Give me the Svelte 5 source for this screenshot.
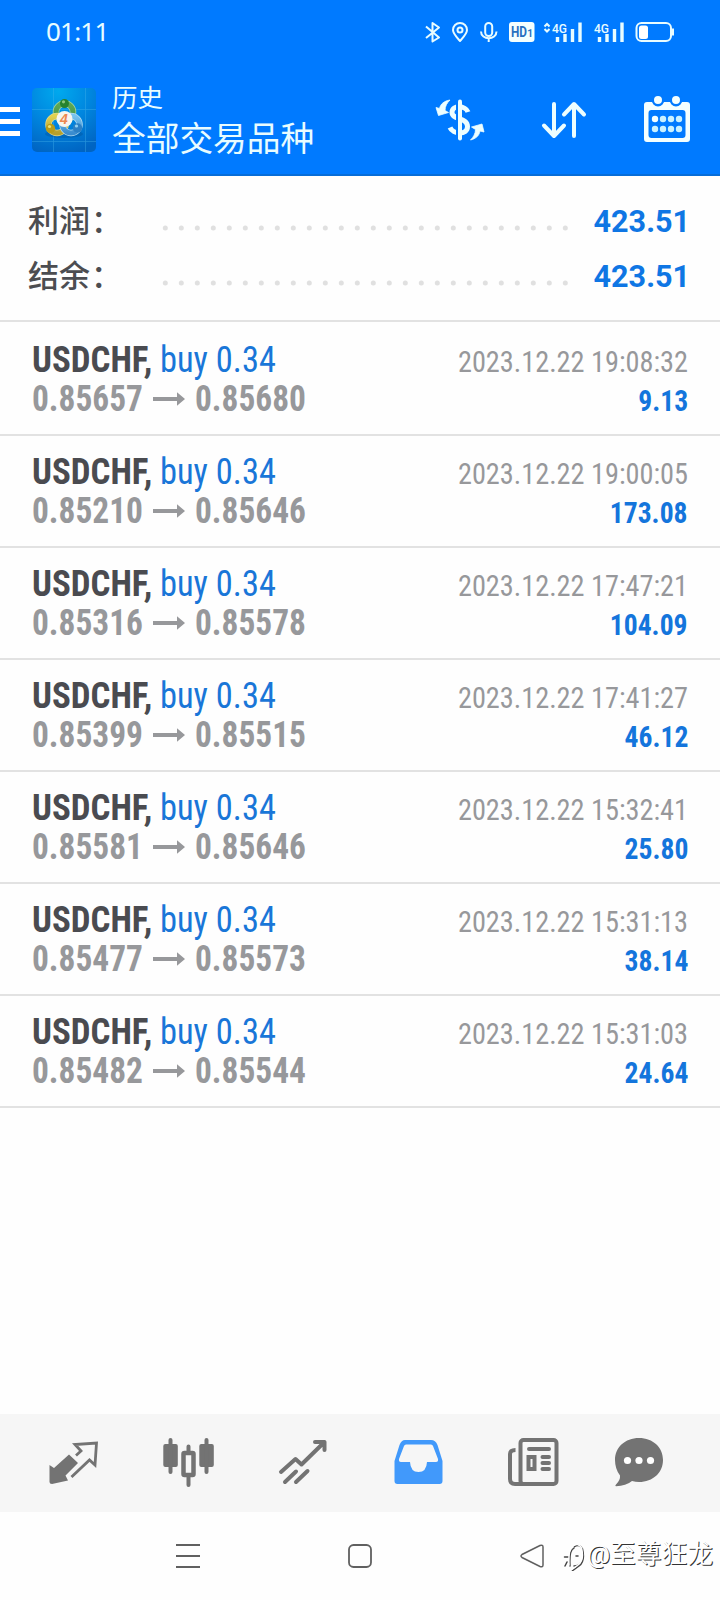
<script>
  const totals = [
    { label: '利润', value: '423.51' },
    { label: '结余', value: '423.51' }
  ];
  const deals = [
    { from: '0.85657', to: '0.85680', time: '2023.12.22 19:08:32', profit: '9.13' },
    { from: '0.85210', to: '0.85646', time: '2023.12.22 19:00:05', profit: '173.08' },
    { from: '0.85316', to: '0.85578', time: '2023.12.22 17:47:21', profit: '104.09' },
    { from: '0.85399', to: '0.85515', time: '2023.12.22 17:41:27', profit: '46.12' },
    { from: '0.85581', to: '0.85646', time: '2023.12.22 15:32:41', profit: '25.80' },
    { from: '0.85477', to: '0.85573', time: '2023.12.22 15:31:13', profit: '38.14' },
    { from: '0.85482', to: '0.85544', time: '2023.12.22 15:31:03', profit: '24.64' }
  ];
  const dots = Array.from({ length: 26 }, (_, i) => 3.3 + i * 16);
</script>

<div class="screen">
  <header>
    <div class="status">
      <span class="clock">01:11</span>
      <svg width="260" height="32" viewBox="420 15 260 32" fill="none" stroke="#e8fcff" stroke-width="2">
        <path d="M426 26.5 439 37.5 432.5 41.5V23L439 27.5 426 38" stroke-linejoin="round" />
        <path d="M460 41C455.500 36 453 33.500 453 30a7 7 0 0 1 14 0C467 33.500 464.500 36 460 41Z" stroke-linejoin="round" />
        <circle cx="460" cy="30" r="2.500" />
        <rect x="485.200" y="23" width="7" height="13" rx="3.500" />
        <path d="M481 31.500c0 9 15.500 9 15.500 0M488.700 38.500V42" />
        <rect x="509" y="22" width="25.500" height="20" rx="3" fill="#f4ffff" stroke="none" />
        <text x="511" y="37.300" class="hd" textLength="16" lengthAdjust="spacingAndGlyphs">HD</text>
        <text x="527.300" y="37.300" class="hd one">1</text>
        <path d="M544.500 26.500 547 24 549.500 26.500M544.500 29 547 31.500 549.500 29" />
        <text x="552" y="33" class="net" textLength="15" lengthAdjust="spacingAndGlyphs">4G</text>
        <path d="M557.500 37V42M565 34V42M572.500 29V42M580 22.500V42" stroke-width="3.400" />
        <text x="594" y="33" class="net" textLength="15" lengthAdjust="spacingAndGlyphs">4G</text>
        <path d="M599.500 37V42M607 34V42M614.500 29V42M622 22.500V42" stroke-width="3.400" />
        <rect x="636.500" y="23" width="34.500" height="18" rx="5" />
        <rect x="639" y="25.500" width="9" height="13.500" rx="2.500" fill="#fff" stroke="none" />
        <path d="M673 28.500v7" />
      </svg>
    </div>
    <div class="bar">
      <span class="menu"><i></i><i></i><i></i></span>
      <svg class="logo" width="64" height="64" viewBox="0 0 64 64">
        <defs>
          <radialGradient id="sky" cx=".42" cy=".05" r="1"><stop offset="0" stop-color="#00a9ee" /><stop offset=".5" stop-color="#0086df" /><stop offset="1" stop-color="#0064c2" /></radialGradient>
          <linearGradient id="gr" x2="0" y2="1"><stop offset="0" stop-color="#5fa956" /><stop offset="1" stop-color="#3f9148" /></linearGradient>
          <linearGradient id="ye" x2="0" y2="1"><stop offset="0" stop-color="#e2d250" /><stop offset="1" stop-color="#b79f2b" /></linearGradient>
          <linearGradient id="bl" x2="0" y2="1"><stop offset="0" stop-color="#78c3ee" /><stop offset="1" stop-color="#3a8ccf" /></linearGradient>
        </defs>
        <rect width="64" height="64" rx="5" fill="url(#sky)" />
        <path d="M21.500 0V64M53.500 0V64M0 21.500H64M0 53.500H64" stroke="#4bb9ed" stroke-width=".7" opacity=".5" />
        <ellipse cx="32" cy="46" rx="19" ry="4" fill="#004c91" opacity=".35" />
        <g fill="none">
          <circle cx="32.500" cy="24" r="8.500" stroke="#a9d8a4" stroke-width="6.500" /><circle cx="32.500" cy="24" r="8.500" stroke="url(#gr)" stroke-width="5" />
          <circle cx="25" cy="36.500" r="8.500" stroke="#e0d98a" stroke-width="6.500" /><circle cx="25" cy="36.500" r="8.500" stroke="url(#ye)" stroke-width="5" />
          <circle cx="39" cy="36.500" r="8.500" stroke="#b2dcf2" stroke-width="6.500" /><circle cx="39" cy="36.500" r="8.500" stroke="url(#bl)" stroke-width="5" />
        </g>
        <circle cx="32.500" cy="15.500" r="4.500" fill="#26832e" /><circle cx="31.500" cy="13.800" r="1.600" fill="#8bc77b" />
        <circle cx="18.500" cy="40.500" r="4.700" fill="#b99c18" /><circle cx="17.500" cy="38.500" r="1.600" fill="#efe36f" />
        <circle cx="45.500" cy="40" r="4.700" fill="#2c80c5" /><circle cx="44.500" cy="38" r="1.600" fill="#91d1f2" />
        <circle cx="32.500" cy="31" r="8" fill="#f6f5ef" />
        <text x="32" y="36" text-anchor="middle" class="four">4</text>
      </svg>
      <div class="titles">
        <span class="sub">历史</span>
        <span class="main">全部交易品种</span>
      </div>
      <svg class="tool money" width="60" height="60" viewBox="430 90 60 60" fill="none" stroke="#edfeff">
        <path d="M468 112C466 106 452 104 452 112.500 452 120 467.500 117 467.500 126.500 467.500 135.500 453 134.500 450 127.500" stroke-width="5" />
        <path d="M457.500 100V140" stroke="#007aff" stroke-width="3" />
        <path d="M460 101.500V138.500" stroke-width="4" stroke-linecap="round" />
        <path d="M450 100C444 101 440.500 104 439.500 108.500L436 107.500 438.500 115.500 448.500 112.500 445 110.500C445 106 447 103 450 100ZM470.500 140C476 138.500 479 136 480 131L484 132 482 124 471.500 127 475.500 129.500C475.500 133.500 473.500 137 470.500 140Z" fill="#edfeff" stroke-width=".8" stroke-linejoin="round" />
      </svg>
      <svg class="tool sort" width="60" height="60" viewBox="534 90 60 60" fill="none" stroke="#edfeff" stroke-width="4" stroke-linecap="round" stroke-linejoin="round">
        <path d="M554 104V135M544 125.500 554 136 564 125.500M574 136V105M564 114.500 574 104 584 114.500" />
      </svg>
      <svg class="tool cal" width="60" height="60" viewBox="637 90 60 60">
        <path fill-rule="evenodd" d="M647 102H687a3 3 0 0 1 3 3V139a3 3 0 0 1-3 3H647a3 3 0 0 1-3-3V105a3 3 0 0 1 3-3ZM651.500 110a3 3 0 0 0-3 3V135a3 3 0 0 0 3 3H682.500a3 3 0 0 0 3-3V113a3 3 0 0 0-3-3Z" fill="#f4ffff" />
        <g fill="#f4ffff" stroke="#007aff" stroke-width="2.400"><circle cx="658" cy="100" r="5.200" /><circle cx="676" cy="100" r="5.200" /></g>
        <g fill="#c9f1ff">
          <circle cx="655" cy="119" r="3.200" fill="#f4ffff" /><circle cx="663" cy="119" r="3.200" /><circle cx="671" cy="119" r="3.200" /><circle cx="679" cy="119" r="3.200" />
          <circle cx="655" cy="129" r="3.200" /><circle cx="663" cy="129" r="3.200" /><circle cx="671" cy="129" r="3.200" /><circle cx="679" cy="129" r="3.200" />
        </g>
      </svg>
    </div>
  </header>

  <section class="totals">
    {#each totals as t}
      <div class="total">
        <span class="label">{t.label}<i>：</i></span>
        <svg class="leader" width="408" height="6">
          {#each dots as x}<circle cx={x} cy="3" r="2.500" fill="#e0e0e0" />{/each}
        </svg>
        <strong>{t.value}</strong>
      </div>
    {/each}
  </section>

  <main>
    {#each deals as d}
      <article>
        <div class="line">
          <span class="sym"><b>USDCHF,</b><em>buy 0.34</em></span>
          <time>{d.time}</time>
        </div>
        <div class="line">
          <span class="price">
            <b>{d.from}</b>
            <svg width="32" height="14" viewBox="0 0 32 14"><path d="M0 5H24V.2L32 7 24 13.800V9H0Z" fill="#97989b" /></svg>
            <b>{d.to}</b>
          </span>
          <b class="profit">{d.profit}</b>
        </div>
      </article>
    {/each}
  </main>

  <nav>
    <svg width="60" height="60" viewBox="43 1433 60 60">
      <path d="M69 1454.500 78 1463 65.500 1475.500 68 1480.500 52 1484Q49.500 1484 49.500 1482V1465L54 1468Z" fill="#737373" />
      <path d="M76 1455.500 81 1451 75 1444.500 96.500 1443 95 1465 89.500 1460 71.500 1477" fill="none" stroke="#737373" stroke-width="2.800" />
    </svg>
    <svg width="60" height="60" viewBox="158 1433 60 60" fill="#737373">
      <rect x="163.300" y="1444" width="14.500" height="23" rx="2" /><rect x="199.300" y="1444" width="14.500" height="23" rx="2" />
      <path d="M170.500 1440V1472M206.500 1440V1472M188.500 1446.500V1453M188.500 1476V1485" stroke="#737373" stroke-width="4" stroke-linecap="round" />
      <rect x="183.500" y="1453" width="10" height="22" rx="1" fill="none" stroke="#737373" stroke-width="4.500" />
    </svg>
    <svg width="60" height="60" viewBox="273 1433 60 60" fill="none" stroke="#737373" stroke-width="4" stroke-linecap="round" stroke-linejoin="round">
      <path d="M281 1472 295.500 1459 301.500 1464.500 324.500 1442M315 1442H324.500V1450M285 1482 296 1471.500M296 1482 307.500 1471" />
    </svg>
    <svg width="60" height="60" viewBox="388 1433 60 60">
      <path fill-rule="evenodd" d="M405 1440H431Q435.500 1440 437.500 1445L442.500 1461V1481Q442.500 1484 439.500 1484H397.500Q394.500 1484 394.500 1481V1461L399.500 1445Q401.500 1440 405 1440ZM406 1444.500Q404.500 1444.500 404 1446L399 1459Q398.500 1462 401 1462H410Q410.500 1472 418.500 1472 426.500 1472 427 1462H436Q438.500 1462 438 1459L433 1446Q432.500 1444.500 431 1444.500Z" fill="#4199fb" />
    </svg>
    <svg width="60" height="60" viewBox="503 1433 60 60" fill="none" stroke="#737373" stroke-width="4">
      <rect x="520.500" y="1440" width="36" height="44" rx="3" />
      <path d="M515.500 1450Q510 1450 510 1454V1479Q510 1484 515 1484H524" />
      <path d="M529 1449H549M542.500 1457H549M542.500 1463H549M542.500 1469H549" stroke-linecap="round" />
      <rect x="528.500" y="1457" width="6" height="12" stroke-width="4" />
    </svg>
    <svg class="chat" width="60" height="60" viewBox="609 1433 60 60">
      <path d="M639 1438C653 1438 663 1447.500 663 1460S653 1482 639 1482Q635.500 1482 632 1481 626 1486 616 1486.300 614.500 1486 616 1484.500 620.500 1480 620 1475.500 615 1469 615 1460C615 1447.500 625 1438 639 1438Z" fill="#737373" />
      <g fill="#fff"><circle cx="627.500" cy="1460.500" r="3.600" /><circle cx="639" cy="1460.500" r="3.600" /><circle cx="650.500" cy="1460.500" r="3.600" /></g>
    </svg>
  </nav>

  <footer>
    <svg width="24" height="26" viewBox="176 1543 24 26"><path d="M176 1545H200M176 1556H200M176 1567H200" stroke="#606060" stroke-width="1.800" /></svg>
    <svg class="home" width="24" height="26" viewBox="348 1543 24 26"><rect x="349" y="1545" width="22" height="22" rx="4.500" fill="none" stroke="#606060" stroke-width="1.800" /></svg>
    <svg class="back" width="26" height="26" viewBox="519 1543 26 26"><path d="M540 1545.500 522 1554.500Q520 1556 522 1557.500L540 1566.500Q543 1567.500 543 1565V1547Q543 1544.500 540 1545.500Z" fill="none" stroke="#606060" stroke-width="1.500" /></svg>
    <div class="mark">
      <svg width="24" height="30" viewBox="562 1541 24 30" fill="none" stroke-width="1.500" stroke-linecap="round">
        <path d="M574 1547Q579 1543 582.500 1549 585.500 1561 579 1566L572 1571M574 1548Q569 1550 570 1566M564.500 1557H569M565 1566 567 1562M576 1556H578M574 1566Q579 1566 581 1562" stroke="#454545" />
        <path d="M573 1546Q578 1542 581.500 1548 584.500 1560 578 1565L571 1570M573 1547Q568 1549 569 1565" stroke="#fff" />
      </svg>
      <span>@至尊狂龙</span>
    </div>
  </footer>
</div>

<style>
  :global(body) { margin: 0; background: #fefefe; }
  .screen { width: 720px; height: 1600px; display: flex; flex-direction: column; overflow: hidden; background: #fefefe; font-family: Roboto, "Noto Sans CJK SC", sans-serif; }
  svg { display: block; flex: none; }
  header { height: 176px; box-sizing: border-box; background: #007aff; border-bottom: 2px solid #076dd8; color: #e8fcff; }
  .status { display: flex; justify-content: space-between; height: 47px; padding: 15px 40px 0 46px; box-sizing: border-box; }
  .clock { font: 26px/32px "Noto Sans", sans-serif; letter-spacing: -.8px; }
  .hd { font: bold 14px Roboto, sans-serif; fill: #2871bf; stroke: none; }
  .one { font-size: 10px; }
  .net { font: 500 13px Roboto, sans-serif; fill: #e8fcff; stroke: none; }
  .bar { display: flex; align-items: flex-start; height: 127px; }
  .menu { display: flex; flex-direction: column; gap: 7px; margin-top: 60px; width: 20px; }
  .menu i { height: 5px; background: #fff; }
  .logo { margin: 41px 0 0 12px; }
  .four { font: italic bold 14px "Liberation Sans", sans-serif; fill: #ec8850; }
  .titles { display: flex; flex-direction: column; width: 318px; margin: 33px 0 0 16px; }
  .sub { font-size: 25.500px; line-height: 36px; }
  .main { font-size: 33.700px; line-height: 48px; white-space: nowrap; }
  .tool { margin-top: 43px; }
  .sort { margin-left: 44px; }
  .cal { margin-left: 43px; }
  .totals { height: 146px; box-sizing: border-box; padding-top: 17px; border-bottom: 2px solid #e2e2e2; }
  .total { display: flex; height: 55px; align-items: center; padding: 0 30px 0 28px; }
  .label { width: 134px; font-weight: 500; font-size: 31px; line-height: 55px; padding-top: 2px; color: #4c4d51; white-space: nowrap; }
  .label i { font-style: normal; margin-left: 1px; }
  .leader { margin-top: 14px; }
  .total strong { margin-left: auto; font-size: 32px; color: #0f76e4; font-weight: 700; transform: scaleX(.955); transform-origin: right; }
  main { padding-top: 2px; flex: 1; }
  article { height: 112px; box-sizing: border-box; border-bottom: 2px solid #e2e2e2; padding: 16px 32px 0; }
  .line { display: flex; justify-content: space-between; align-items: baseline; height: 39px; line-height: 39px; font-stretch: 75%; white-space: nowrap; }
  .sym, .price { font-size: 37px; }
  .sym b, .sym em, .price b { display: inline-block; transform-origin: left; }
  .sym b { width: 128px; color: #4a4b50; transform: scaleX(.944); }
  .sym em { color: #1976d8; font-style: normal; transform: scaleX(.93); }
  .price { display: flex; align-items: center; color: #97989b; }
  .price b { width: 121px; transform: scaleX(.902); }
  .price b:last-child { margin-left: 10px; }
  time { font-size: 30px; color: #97989b; transform: scaleX(.943); transform-origin: right; }
  .profit { font-size: 30px; color: #1475dc; transform: scaleX(.92); transform-origin: right; }
  nav { display: flex; gap: 55px; height: 98px; padding: 19px 0 0 43px; box-sizing: border-box; background: #f6f6f6; }
  .chat { margin-left: -9px; }
  footer { display: flex; height: 88px; padding: 31px 0 0 176px; box-sizing: border-box; }
  .home { margin-left: 148px; }
  .back { margin-left: 147px; }
  .mark { display: flex; margin: -2px 0 0 17px; }
  .mark span { margin-left: 1px; font-size: 25.700px; line-height: 26px; color: #fff; text-shadow: 1px 1px .5px #333; white-space: nowrap; }
</style>
